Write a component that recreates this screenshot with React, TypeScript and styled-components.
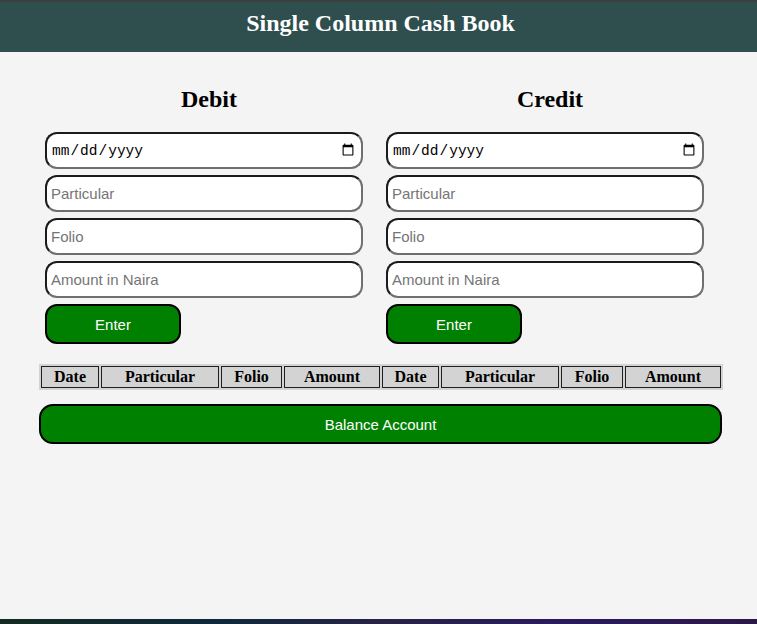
import styled, { createGlobalStyle } from 'styled-components';

const GlobalStyle = createGlobalStyle`
  html, body {
    margin: 0;
    padding: 0;
    height: 100%;
    background: #f4f4f4;
  }
  #root {
    height: 100%;
  }
`;

const Page = styled.div`
  height: 100vh;
  display: flex;
  flex-direction: column;
  background: #f4f4f4;
  font-family: "Liberation Serif", "Times New Roman", serif;
`;

const Header = styled.header`
  background: #2f4f4f;
  border-top: 2px solid #3c3f3f;
  padding: 7px 0 15px 4px;
  text-align: center;
`;

const Title = styled.h1`
  margin: 0;
  color: #fff;
  font-size: 24px;
  line-height: 28px;
  font-weight: bold;
`;

const Main = styled.main`
  flex: 1;
  padding: 0 36px 0 39px;
`;

const Forms = styled.div`
  display: grid;
  grid-template-columns: 328px 328px;
  column-gap: 13px;
  margin-left: 6px;
`;

const Column = styled.section`
  display: flex;
  flex-direction: column;
  gap: 6px;
`;

const Heading = styled.h2`
  margin: 33px 0 13px;
  text-align: center;
  font-size: 24px;
  line-height: 28px;
  font-weight: bold;
  color: #000;
`;

const Field = styled.input<{ $mono?: boolean }>`
  box-sizing: border-box;
  width: 318px;
  height: 37px;
  padding: 1px 4px;
  border-width: 2px;
  border-style: solid;
  border-color: #1b1b1b #6f6f6f #6f6f6f #1b1b1b;
  border-radius: 12px;
  background: #fff;
  color: #000;
  font-family: ${({ $mono }) =>
    $mono ? '"Liberation Mono", "DejaVu Sans Mono", monospace' : '"Liberation Sans", Arial, sans-serif'};
  font-size: ${({ $mono }) => ($mono ? '14.5px' : '15px')};
  outline: none;

  &::placeholder {
    color: #757575;
  }
`;

const GreenButton = styled.button<{ $wide?: boolean }>`
  box-sizing: border-box;
  width: ${({ $wide }) => ($wide ? '683px' : '136px')};
  height: 40px;
  background: #008000;
  color: #fff;
  border: 2px solid #000;
  border-radius: ${({ $wide }) => ($wide ? '14px' : '12px')};
  font-family: "Liberation Sans", Arial, sans-serif;
  font-size: 15px;
  cursor: pointer;
`;

const Ledger = styled.table`
  width: 683px;
  margin-top: 20px;
  background: #d3d3d3;
  border-collapse: separate;
  border-spacing: 2px;
  table-layout: fixed;
`;

const HeadCell = styled.th<{ $w: number }>`
  box-sizing: border-box;
  width: ${({ $w }) => $w}px;
  padding: 1px;
  border: 1px solid #1f1f1f;
  font-size: 16px;
  line-height: 18px;
  font-weight: bold;
  text-align: center;
  color: #000;
`;

const BalanceRow = styled.div`
  margin-top: 14px;
`;

const Strip = styled.div`
  height: 5px;
  background: linear-gradient(90deg, #142a22 0%, #10283c 30%, #272344 50%, #2a1a5e 75%, #2c1846 100%);
`;

const columns: { label: string; w: number }[] = [
  { label: 'Date', w: 58 },
  { label: 'Particular', w: 118 },
  { label: 'Folio', w: 61 },
  { label: 'Amount', w: 96 },
  { label: 'Date', w: 57 },
  { label: 'Particular', w: 118 },
  { label: 'Folio', w: 62 },
  { label: 'Amount', w: 96 },
];

const EntryForm = ({ title }: { title: string }) => (
  <Column>
    <Heading>{title}</Heading>
    <Field type="date" $mono />
    <Field type="text" placeholder="Particular" />
    <Field type="text" placeholder="Folio" />
    <Field type="number" placeholder="Amount in Naira" />
    <GreenButton>Enter</GreenButton>
  </Column>
);

const App = () => {
  return (
    <Page>
      <GlobalStyle />
      <Header>
        <Title>Single Column Cash Book</Title>
      </Header>
      <Main>
        <Forms>
          <EntryForm title="Debit" />
          <EntryForm title="Credit" />
        </Forms>
        <Ledger>
          <thead>
            <tr>
              {columns.map((c, i) => (
                <HeadCell key={i} $w={c.w}>{c.label}</HeadCell>
              ))}
            </tr>
          </thead>
        </Ledger>
        <BalanceRow>
          <GreenButton $wide>Balance Account</GreenButton>
        </BalanceRow>
      </Main>
      <Strip />
    </Page>
  );
};

export default App;
